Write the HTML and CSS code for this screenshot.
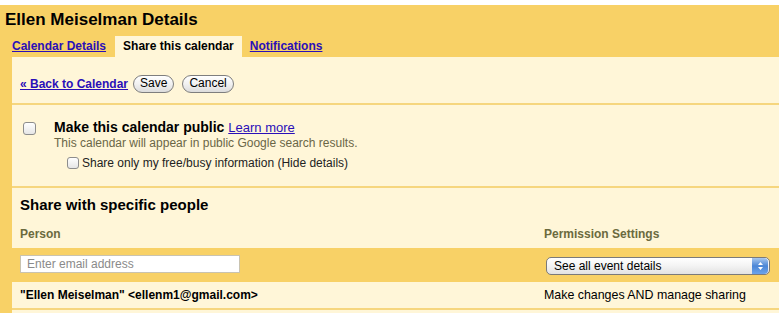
FILE: index.html
```html
<!DOCTYPE html>
<html>
<head>
<meta charset="utf-8">
<link rel="stylesheet" href="styles.css">
</head>
<body>
<div class="frame">
  <h1 class="title">Ellen Meiselman Details</h1>
  <div class="tabs">
    <a class="tab link" href="#">Calendar Details</a>
    <span class="tab active">Share this calendar</span>
    <a class="tab link" href="#">Notifications</a>
  </div>
  <div class="panel">
    <div class="toolbar">
      <a class="back" href="#">« Back to Calendar</a>
      <button class="pill">Save</button>
      <button class="pill">Cancel</button>
    </div>
    <div class="public">
      <span class="cb big"></span>
      <div class="public-text">
        <div class="public-head"><b>Make this calendar public</b> <a class="learn" href="#">Learn more</a></div>
        <div class="hint">This calendar will appear in public Google search results.</div>
        <div class="sub"><span class="cb small"></span>Share only my free/busy information (Hide details)</div>
      </div>
    </div>
    <div class="people">
      <h2 class="people-title">Share with specific people</h2>
      <div class="row head">
        <div class="c1">Person</div>
        <div class="c2">Permission Settings</div>
      </div>
      <div class="row add">
        <div class="c1"><span class="email">Enter email address</span></div>
        <div class="c2">
          <div class="select"><span>See all event details</span><span class="stepper"><svg width="7" height="10" viewBox="0 0 7 10"><path d="M3.5 1 L6 4 L1 4 Z M3.5 9 L6 6 L1 6 Z" fill="#fff"/></svg></span></div>
        </div>
      </div>
      <div class="row person">
        <div class="c1"><b>"Ellen Meiselman" &lt;ellenm1@gmail.com&gt;</b></div>
        <div class="c2">Make changes AND manage sharing</div>
      </div>
    </div>
  </div>
</div>
</body>
</html>
```

FILE: styles.css
```css
* { box-sizing: border-box; }
html, body { margin: 0; padding: 0; background: #fff; }
body { font-family: "Liberation Sans", Arial, sans-serif; color: #000; overflow: hidden; }
.frame { margin-top: 5px; background: #f8d166; padding-left: 12px; }
.title { margin: 0 0 0 -7px; height: 31px; font-size: 17px; font-weight: bold; line-height: 29px; }
.tabs { display: flex; height: 21px; align-items: stretch; }
.tab { font-size: 12px; font-weight: bold; line-height: 20px; padding: 0 4px; }
.tab.link { color: #2a0fb8; text-decoration: underline; }
.tab:first-child { margin-left: 0; padding-left: 0; }
.tab.active { background: #fff6d8; color: #000; padding: 0 8px 0 8px; margin: 0 4px 0 5px; }
.panel { background: #fff6d8; height: 260px; }
.toolbar { height: 48px; display: flex; align-items: center; padding: 7px 0 0 8px; border-bottom: 2px solid #f6d67e; }
.back { color: #2a0fb8; font-size: 12px; font-weight: bold; text-decoration: underline; margin-right: 5px; }
.pill { font-family: "Liberation Sans", Arial, sans-serif; font-size: 12px; height: 18px; padding: 0 6px; margin-right: 8px; border: 1px solid #7e7e7e; border-radius: 9px; background: linear-gradient(#fff, #f1f1f1 50%, #dcdcdc); color: #000; line-height: 15px; }
.public { height: 83px; border-bottom: 2px solid #f6d67e; display: flex; padding: 14px 0 0 11px; }
.cb { display: inline-block; border: 1px solid #8d8d8d; border-radius: 3px; background: linear-gradient(#fff, #e6e6e6); }
.cb.big { width: 13px; height: 13px; margin-top: 3px; margin-right: 18px; }
.cb.small { width: 12px; height: 12px; margin-right: 3px; vertical-align: -2px; }
.public-head { font-size: 14px; line-height: 16px; }
.learn { color: #2a0fb8; font-size: 13px; text-decoration: underline; }
.hint { font-size: 12px; color: #6a6647; line-height: 15px; margin-top: 0; }
.sub { font-size: 12px; line-height: 16px; margin: 4px 0 0 13px; color: #222; }
.people { padding-top: 7px; }
.people-title { margin: 0 0 0 8px; font-size: 15px; line-height: 20px; font-weight: bold; }
.row { display: flex; }
.c1 { width: 532px; padding-left: 8px; }
.c2 { flex: 1; }
.head { height: 33px; align-items: center; font-size: 12px; font-weight: bold; color: #6b6a3e; padding-top: 5px; }
.add { background: #f8d166; height: 34px; align-items: center; }
.email { display: block; width: 220px; height: 18px; background: #fff; border: 1px solid #c9c3b0; font-size: 12px; color: #8a8a8a; padding-left: 6px; line-height: 16px; margin-top: -3px; }
.add .c2 { padding-left: 2px; padding-top: 1px; }
.select { width: 224px; height: 18px; border: 1px solid #7a7a7a; border-radius: 5px; background: linear-gradient(#fff, #f3f3f3 50%, #e2e2e2); display: flex; align-items: center; justify-content: space-between; font-size: 12px; padding-left: 7px; overflow: hidden; }
.stepper { width: 16px; height: 16px; margin-right: 1px; border-radius: 0 4px 4px 0; background: linear-gradient(#a9c8ee, #4b86d6 50%, #6aa3ea); display: flex; align-items: center; justify-content: center; }
.person { height: 28px; align-items: center; font-size: 12px; border-bottom: 2px solid #f6d67e; }
.person .c2 { font-size: 12.4px; }
```
